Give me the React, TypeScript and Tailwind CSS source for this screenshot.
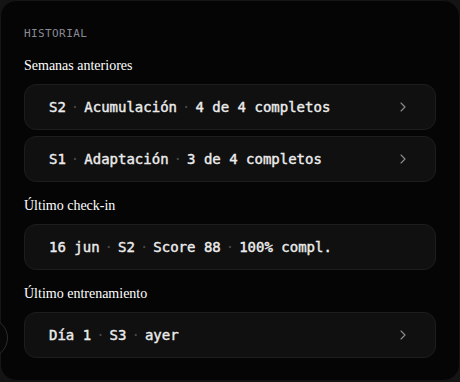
import { ChevronRight } from "lucide-react";

const mono = { fontFamily: '"DejaVu Sans Mono", "Liberation Mono", monospace' };

function Row({ parts, arrow = true }: { parts: string[]; arrow?: boolean }) {
  return (
    <div className="h-[46px] rounded-xl bg-[#101010] border border-[#1d1d1d] flex items-center justify-between pl-6 pr-6">
      <div className="flex items-center gap-[5px] text-[14px] text-[#ececec]" style={mono}>
        {parts.map((p, i) => (
          <span key={i} className="flex items-center gap-[5px]">
            {i > 0 && <span className="text-[#4a4a4a]">·</span>}
            <span className="[-webkit-text-stroke:0.4px_#ececec]">{p}</span>
          </span>
        ))}
      </div>
      {arrow && <ChevronRight size={16} strokeWidth={1.6} className="text-[#8c8c8c]" />}
    </div>
  );
}

function Label({ children }: { children: string }) {
  return (
    <div className="text-[14px] leading-5 text-white font-['Liberation_Serif',serif]">
      {children}
    </div>
  );
}

export default function App() {
  return (
    <div className="relative w-[460px] h-[382px] bg-[#141414] overflow-hidden">
      <div className="h-[381px] rounded-2xl bg-[#050505] border border-[#161616] pt-[25px] px-[23px]">
        <div className="flex flex-col gap-[14px]">
          <div className="text-[11px] leading-4 tracking-[0.4px] text-[#8a8a93]" style={mono}>
            HISTORIAL
          </div>
          <div className="flex flex-col gap-2">
            <Label>Semanas anteriores</Label>
            <div className="flex flex-col gap-[6px]">
              <Row parts={["S2", "Acumulación", "4 de 4 completos"]} />
              <Row parts={["S1", "Adaptación", "3 de 4 completos"]} />
            </div>
          </div>
          <div className="flex flex-col gap-2">
            <Label>Último check-in</Label>
            <Row parts={["16 jun", "S2", "Score 88", "100% compl."]} arrow={false} />
          </div>
          <div className="flex flex-col gap-2">
            <Label>Último entrenamiento</Label>
            <Row parts={["Día 1", "S3", "ayer"]} />
          </div>
        </div>
      </div>
      <div className="absolute left-[-32px] top-[318px] w-10 h-10 rounded-full border border-[#2c2c2c] bg-[#070707]" />
    </div>
  );
}
